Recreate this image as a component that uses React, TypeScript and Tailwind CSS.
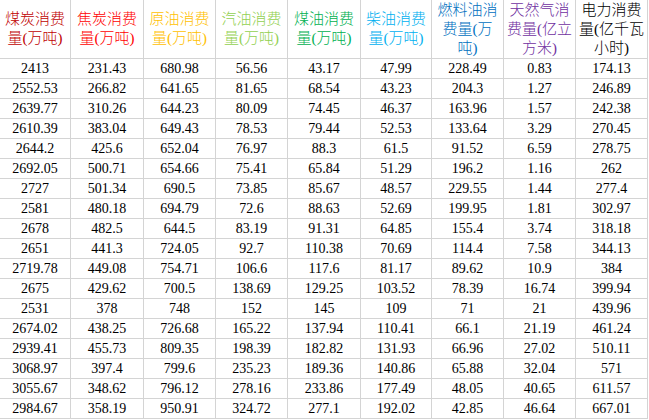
const columns = [
  { w: "w-[71px]", color: "text-[#c00000]", lines: ["煤炭消费", "量(万吨)"] },
  { w: "w-[73px]", color: "text-[#ff0000]", lines: ["焦炭消费", "量(万吨)"] },
  { w: "w-[72px]", color: "text-[#ffc000]", lines: ["原油消费", "量(万吨)"] },
  { w: "w-[72px]", color: "text-[#92d050]", lines: ["汽油消费", "量(万吨)"] },
  { w: "w-[73px]", color: "text-[#00b050]", lines: ["煤油消费", "量(万吨)"] },
  { w: "w-[71px]", color: "text-[#00b0f0]", lines: ["柴油消费", "量(万吨)"] },
  { w: "w-[72px]", color: "text-[#0070c0]", lines: ["燃料油消", "费量(万", "吨)"] },
  { w: "w-[72px]", color: "text-[#7030a0]", lines: ["天然气消", "费量(亿立", "方米)"] },
  { w: "w-[72px]", color: "text-black", lines: ["电力消费", "量(亿千瓦", "小时)"] },
];

const rows = [
  ["2413", "231.43", "680.98", "56.56", "43.17", "47.99", "228.49", "0.83", "174.13"],
  ["2552.53", "266.82", "641.65", "81.65", "68.54", "43.23", "204.3", "1.27", "246.89"],
  ["2639.77", "310.26", "644.23", "80.09", "74.45", "46.37", "163.96", "1.57", "242.38"],
  ["2610.39", "383.04", "649.43", "78.53", "79.44", "52.53", "133.64", "3.29", "270.45"],
  ["2644.2", "425.6", "652.04", "76.97", "88.3", "61.5", "91.52", "6.59", "278.75"],
  ["2692.05", "500.71", "654.66", "75.41", "65.84", "51.29", "196.2", "1.16", "262"],
  ["2727", "501.34", "690.5", "73.85", "85.67", "48.57", "229.55", "1.44", "277.4"],
  ["2581", "480.18", "694.79", "72.6", "88.63", "52.69", "199.95", "1.81", "302.97"],
  ["2678", "482.5", "644.5", "83.19", "91.31", "64.85", "155.4", "3.74", "318.18"],
  ["2651", "441.3", "724.05", "92.7", "110.38", "70.69", "114.4", "7.58", "344.13"],
  ["2719.78", "449.08", "754.71", "106.6", "117.6", "81.17", "89.62", "10.9", "384"],
  ["2675", "429.62", "700.5", "138.69", "129.25", "103.52", "78.39", "16.74", "399.94"],
  ["2531", "378", "748", "152", "145", "109", "71", "21", "439.96"],
  ["2674.02", "438.25", "726.68", "165.22", "137.94", "110.41", "66.1", "21.19", "461.24"],
  ["2939.41", "455.73", "809.35", "198.39", "182.82", "131.93", "66.96", "27.02", "510.11"],
  ["3068.97", "397.4", "799.6", "235.23", "189.36", "140.86", "65.88", "32.04", "571"],
  ["3055.67", "348.62", "796.12", "278.16", "233.86", "177.49", "48.05", "40.65", "611.57"],
  ["2984.67", "358.19", "950.91", "324.72", "277.1", "192.02", "42.85", "46.64", "667.01"],
];

export default function App() {
  return (
    <div className="w-[649px] h-[420px] bg-white overflow-hidden font-['Liberation_Serif','Noto_Sans_CJK_SC',serif]">
      {/* HEADER */}
      <div className="flex">
        {columns.map((c, i) => (
          <div
            key={i}
            className={`${c.w} h-[59px] shrink-0 border-r border-b border-[#d4d4d4] flex flex-col items-center justify-center text-[15px] leading-[19px] font-light whitespace-nowrap ${c.color}`}
          >
            {c.lines.map((l, j) => (
              <span key={j}>{l}</span>
            ))}
          </div>
        ))}
      </div>

      {/* DATA */}
      {rows.map((r, i) => (
        <div key={i} className="flex">
          {r.map((v, j) => (
            <div
              key={j}
              className={`${columns[j].w} h-[20px] shrink-0 border-r border-b border-[#d4d4d4] flex items-center justify-center text-[14px] text-black`}
            >
              {v}
            </div>
          ))}
        </div>
      ))}
    </div>
  );
}
